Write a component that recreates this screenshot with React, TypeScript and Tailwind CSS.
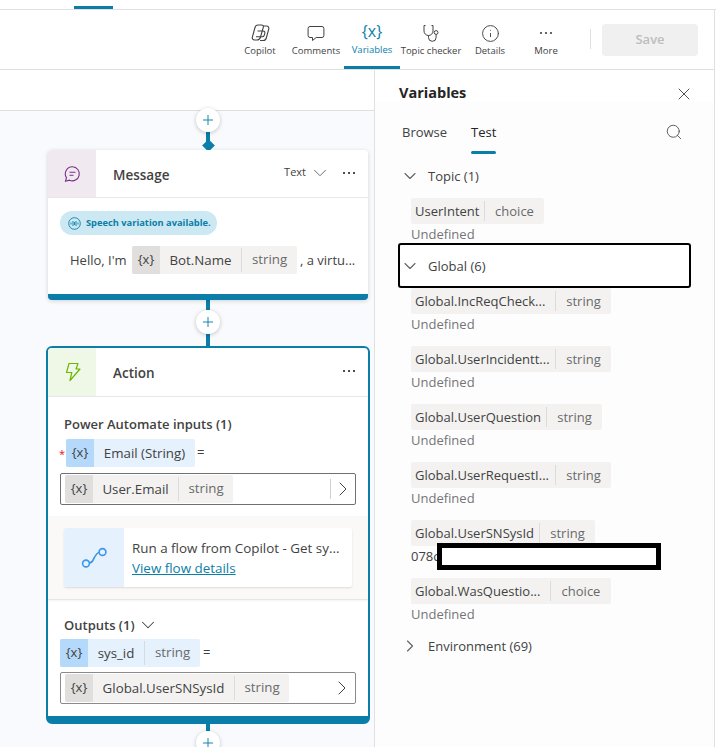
import React from "react";
import { X, Search, ChevronDown, ChevronRight, Info, Plus } from "lucide-react";

function Dots() {
  return (
    <svg width="14" height="4" viewBox="0 0 14 4" fill="currentColor" className="block">
      <circle cx="2" cy="2" r="1.1" />
      <circle cx="7" cy="2" r="1.1" />
      <circle cx="12" cy="2" r="1.1" />
    </svg>
  );
}

function ToolItem({ label, width, active, children }: { label: string; width: string; active?: boolean; children: React.ReactNode }) {
  return (
    <div className={`${width} relative h-full flex flex-col items-center justify-start pt-[12px] ${active ? "text-[#0a7ea8]" : "text-[#424242]"}`}>
      <div className="h-[22px] flex items-center justify-center">{children}</div>
      <div className={`text-[9.5px] leading-[13px] whitespace-nowrap ${active ? "-translate-y-px" : ""}`}>{label}</div>
      {active && <div className="absolute bottom-0 inset-x-0 h-[3px] bg-[#0a7ea8]" />}
    </div>
  );
}

function Chip({ name, type, nameW, typeW, tone = "gray" }: { name: string; type?: string; nameW: string; typeW?: string; tone?: "gray" | "blue" }) {
  const blue = tone === "blue";
  return (
    <div className={`h-[28px] inline-flex items-stretch rounded-[2px] overflow-hidden text-[13.3px] ${blue ? "bg-[#e5f1fc]" : "bg-[#f3f2f1]"}`}>
      <div className={`w-[28px] flex items-center justify-center text-[#424242] ${blue ? "bg-[#b4d9fb]" : "bg-[#e0dfdd]"}`}>
        <span className="text-[13px] leading-none whitespace-nowrap -mt-[2px]">{"{x}"}</span>
      </div>
      <div className={`${nameW} pt-px flex items-center justify-center text-[#424242] whitespace-nowrap`}>{name}</div>
      {type && (
        <div className={`${typeW} flex items-center my-[2px] justify-center border-l ${blue ? "border-[#d3dbe3]" : "border-[#dcdbd9]"} text-[#6a6a6a]`}>{type}</div>
      )}
    </div>
  );
}

function AddButton() {
  return (
    <div className="w-[24px] h-[24px] shrink-0 rounded-full bg-white shadow-[0_1px_4px_rgba(0,0,0,0.22)] flex items-center justify-center text-[#0a7ea8] relative z-10">
      <Plus size={16} strokeWidth={1.4} />
    </div>
  );
}

function Wire({ h }: { h: string }) {
  return <div className={`${h} w-[4px] bg-[#0a7ea8] shrink-0`} />;
}

function VarChip({ name, type, nameW, typeW }: { name: string; type: string; nameW: string; typeW: string }) {
  return (
    <div className="h-[26px] inline-flex items-stretch bg-[#f3f2f1] rounded-[2px] text-[13px]">
      <div className={`${nameW} pl-[4px] pt-px flex items-center text-[#424242] whitespace-nowrap`}>{name}</div>
      <div className={`${typeW} my-[3px] pt-px flex items-center justify-center border-l border-[#dcdbd9] text-[#6a6a6a]`}>{type}</div>
    </div>
  );
}

function VarEntry({ name, type, nameW, typeW, value = "Undefined", dark, className = "" }: { name: string; type: string; nameW: string; typeW: string; value?: string; dark?: boolean; className?: string }) {
  return (
    <div className={`flex flex-col items-start ${className}`}>
      <VarChip name={name} type={type} nameW={nameW} typeW={typeW} />
      <div className={`text-[13px] leading-[20px] ${dark ? "text-[#424242]" : "text-[#757575]"}`}>{value}</div>
    </div>
  );
}

export default function App() {
  return (
    <div className="w-[716px] h-[747px] overflow-hidden bg-white flex flex-col text-[#424242] font-['Open_Sans',sans-serif]">
      {/* top strip */}
      <div className="h-[10px] shrink-0 border-b border-[#e0e0e0] pl-[74px] pr-[1px]">
        <div className="w-[39px] h-[3px] mt-[6px] bg-[#0a7ea8]" />
      </div>
      {/* toolbar */}
      <div className="h-[60px] shrink-0 mr-[1px] border-r border-b border-[#e0e0e0] flex items-stretch justify-end pr-[16px]">
        <ToolItem label="Copilot" width="w-[56px]">
          <svg width="19" height="18" viewBox="0 0 19 18" fill="none" stroke="#424242" strokeWidth="1.1">
            <path d="M7 1h3.500c1.500 0 2.200 1 1.800 2.300L9.500 13c-.5 1.700-1.800 3-3.500 3H3.500C2 16 1 14.800 1.300 13.300L4 3.500C4.400 2 5.500 1 7 1Z" />
            <path d="M12.500 2h3c1.600 0 2.600 1.200 2.300 2.800L15.300 14c-.4 1.500-1.500 2.500-3 2.500H9" />
            <path d="M6.500 7h5.500c1.500 0 2.200 1 1.800 2.300l-.6 2c-.3 1-1.200 1.500-2.200 1.500H5" />
          </svg>
        </ToolItem>
        <ToolItem label="Comments" width="w-[56px]">
          <svg width="18" height="17" viewBox="0 0 18 17" fill="none" stroke="#424242" strokeWidth="1">
            <path d="M3 1.500h12a1.900 1.900 0 0 1 1.900 1.900v7.200a1.900 1.900 0 0 1-1.900 1.900H9.200l-3.700 3v-3H3A1.900 1.900 0 0 1 1.100 10.600V3.400A1.900 1.900 0 0 1 3 1.500Z" />
          </svg>
        </ToolItem>
        <ToolItem label="Variables" width="w-[56px]" active>
          <span className="text-[16px] leading-none -mt-[4px] whitespace-nowrap">{"{x}"}</span>
        </ToolItem>
        <ToolItem label="Topic checker" width="w-[62px]">
          <svg width="18" height="19" viewBox="0 0 18 19" fill="none" stroke="#424242" strokeWidth="1">
            <path d="M3.500 1.500H2v5.500a4.500 4.500 0 0 0 9 0V1.500H9.500" />
            <path d="M6.500 11.500v2a3.800 3.800 0 0 0 7.600 0V10.500" />
            <circle cx="14.100" cy="8.500" r="1.900" />
          </svg>
        </ToolItem>
        <ToolItem label="Details" width="w-[56px]">
          <Info size={19} strokeWidth={1.2} />
        </ToolItem>
        <ToolItem label="More" width="w-[56px]">
          <Dots />
        </ToolItem>
        <div className="w-px h-[20px] self-center bg-[#e0e0e0] mx-[16px] -mt-px" />
        <div className="w-[96px] h-[32px] self-center -ml-[5px] rounded-[4px] bg-[#f0f0f0] text-[#bdbdbd] text-[13px] font-semibold flex items-center justify-center">Save</div>
      </div>

      {/* body */}
      <div className="flex-1 min-h-0 flex mr-[1px] border-r border-[#e0e0e0]">
        {/* canvas */}
        <div className="w-[375px] shrink-0 border-r border-[#e0e0e0] flex flex-col">
          <div className="h-[41px] shrink-0 bg-white border-b border-[#e0e0e0]" />
          <div className="flex-1 min-h-0 bg-[#f8fafd] pl-[46px] w-[374px] flex flex-col">
            <div className="w-[324px] flex flex-col items-center">
              <div className="-mt-[3px]"><AddButton /></div>
              <Wire h="h-[14px]" />
              <div className="w-[9px] h-[9px] bg-[#0a7ea8] rotate-45 -mt-[5px] shrink-0" />
              {/* Message card */}
              <div className="w-[320px] relative z-10 bg-white rounded-[4px] overflow-hidden shadow-[0_1px_4px_rgba(0,0,0,0.16)] border-b-[6px] border-[#0a7ea8] h-[150px] shrink-0">
                <div className="h-[48px] flex items-center border-b border-[#e8e8e8]">
                  <div className="w-[48px] h-full bg-[#f0e9f0] flex items-center justify-center">
                    <svg width="18" height="18" viewBox="0 0 18 18" fill="none" stroke="#7a2f87" strokeWidth="1.1">
                      <path d="M9.500 1.800a7 7 0 1 1-3 13.400L2.500 16.300l1-3.600A7 7 0 0 1 9.500 1.800Z" />
                      <path d="M6.500 7.300h6M6.500 10.300h4" />
                    </svg>
                  </div>
                  <div className="ml-[17px] pt-[3px] text-[13.5px] font-semibold text-[#424242]">Message</div>
                  <div className="ml-auto text-[11px] -mt-[2px] text-[#424242]">Text</div>
                  <ChevronDown size={22} strokeWidth={1} className="ml-[3px] -mt-[1px] text-[#616161]" />
                  <div className="ml-[11px] mr-[12px] text-[#242424] -mt-[2px]"><Dots /></div>
                </div>
                <div className="pl-[12px] pt-[13px]">
                  <div className="w-[157px] h-[24px] rounded-full bg-[#cce8f2] flex items-center pl-[8px] text-[#0a7ea8] text-[9.3px] font-bold whitespace-nowrap">
                    <svg width="13" height="13" viewBox="0 0 13 13" fill="none" stroke="#0a7ea8" strokeWidth="0.9" className="mr-[5px] shrink-0">
                      <circle cx="6.500" cy="6.500" r="5.800" />
                      <path d="M3 5.500v2M5 4v5M6.500 5v3M8 4v5M10 5.500v2" />
                    </svg>
                    Speech variation available.
                  </div>
                  <div className="flex items-center mt-[11px] pl-[10px] text-[13px] text-[#424242] whitespace-nowrap">
                    <span className="w-[62px] pt-px">Hello, I'm</span>
                    <Chip name="Bot.Name" type="string" nameW="w-[81px]" typeW="w-[56px]" />
                    <span className="ml-[3px] pt-px">, a virtu...</span>
                  </div>
                </div>
              </div>
              <Wire h="h-[10px]" />
              <AddButton />
              <Wire h="h-[12px]" />
              {/* Action card */}
              <div className="w-[324px] h-[378px] shrink-0 rounded-[6px] border-2 border-b-[8px] border-[#0a7ea8] bg-white overflow-hidden">
                <div className="h-[49px] flex items-center border-b border-[#e8e8e8]">
                  <div className="w-[48px] h-full bg-[#eff7e7] flex items-center justify-center">
                    <svg width="18" height="20" viewBox="0 0 18 20" fill="none" stroke="#6bb700" strokeWidth="1.2" strokeLinejoin="round">
                      <path d="M6 1.500h9l-2 5.500h4L7 18.500l1.800-8H3.500Z" />
                    </svg>
                  </div>
                  <div className="ml-[17px] pt-[3px] text-[13.5px] font-semibold text-[#424242]">Action</div>
                  <div className="ml-auto mr-[12px] -mt-[2px] text-[#242424]"><Dots /></div>
                </div>
                <div className="h-[119px] relative px-[12px]">
                  <div className="pl-[4px] pt-[18px] text-[13px] leading-[18px] font-semibold text-[#424242]">Power Automate inputs (1)</div>
                  <div className="flex items-center mt-[6px] pl-[6px] relative">
                    <span className="absolute left-[-1px] top-[9px] text-[#e81123] text-[11px] leading-none">*</span>
                    <Chip name="Email (String)" nameW="w-[101px]" tone="blue" />
                    <span className="ml-[2px] text-[13px] text-[#424242]">=</span>
                  </div>
                  <div className="h-[32px] mt-[6px] rounded-[2px] border border-[#707070] flex items-center pl-[4px]">
                    <Chip name="User.Email" type="string" nameW="w-[85px]" typeW="w-[55px]" />
                    <div className="ml-auto w-px h-[20px] bg-[#d0d0d0]" />
                    <ChevronRight size={24} strokeWidth={1} className="text-[#424242]" />
                  </div>
                </div>
                <div className="h-[84px] bg-[#faf9f8] border-b border-[#e6e6e6] shadow-[0_1px_2px_rgba(0,0,0,0.05)] pl-[16px] pr-[16px] pt-[12px]">
                  <div className="h-[59px] bg-white rounded-[2px] shadow-[0_1px_2px_rgba(0,0,0,0.12)] flex overflow-hidden">
                    <div className="w-[60px] shrink-0 bg-[#e5f1fc] flex items-center justify-center">
                      <svg width="27" height="22" viewBox="0 0 27 22" fill="none" stroke="#3b97e8" strokeWidth="1.6">
                        <circle cx="5" cy="16.500" r="3.400" />
                        <circle cx="21.500" cy="5" r="3.400" />
                        <path d="M8.400 16c3.400-.3 3.500-3 5-5.500 1.300-2.500 2.800-4.800 4.800-5" />
                      </svg>
                    </div>
                    <div className="pl-[8px] pt-[10px] text-[13.4px] leading-[20px] whitespace-nowrap">
                      <div className="text-[#424242]">Run a flow from Copilot - Get sy...</div>
                      <div className="text-[#0a7ea8] underline">View flow details</div>
                    </div>
                  </div>
                </div>
                <div className="px-[12px] pt-[16px]">
                  <div className="pl-[4px] flex items-center text-[13px] leading-[18px] font-semibold text-[#424242]">
                    Outputs (1)
                    <ChevronDown size={22} strokeWidth={1.1} className="ml-[2px] -my-[2px]" />
                  </div>
                  <div className="flex items-center mt-[5px]">
                    <Chip name="sys_id" type="string" nameW="w-[56px]" typeW="w-[56px]" tone="blue" />
                    <span className="ml-[3px] text-[13px] text-[#424242]">=</span>
                  </div>
                  <div className="h-[32px] mt-[5px] rounded-[2px] border border-[#8a8a8a] flex items-center pl-[4px]">
                    <Chip name="Global.UserSNSysId" type="string" nameW="w-[141px]" typeW="w-[55px]" />
                    <ChevronRight size={24} strokeWidth={1} className="ml-auto mr-[1px] text-[#424242]" />
                  </div>
                </div>
              </div>
              <Wire h="h-[7px]" />
              <AddButton />
            </div>
          </div>
        </div>

        {/* panel */}
        <div className="flex-1 min-w-0 relative flex flex-col bg-[#fdfdfe]">
          <div className="h-[32px] shrink-0 flex items-end pl-[24px] pr-[20px] bg-white">
            <div className="text-[14.5px] leading-[20px] font-bold text-[#242424] translate-y-px">Variables</div>
            <X size={20} strokeWidth={1.1} className="ml-auto -mb-[2px] text-[#424242]" />
          </div>
          <div className="h-[37px] shrink-0 flex pl-[27px] pr-[31px] mt-[13px] text-[13px] text-[#424242] relative">
            <div className="pt-[8px]">Browse</div>
            <div className="ml-[24px] pt-[8px] relative font-medium text-[#242424]">
              Test
              <div className="absolute left-0 right-0 -bottom-[2px] h-[3px] rounded-full bg-[#0a7ea8]" />
            </div>
            <Search size={18} strokeWidth={1.1} className="ml-auto mt-[8px] text-[#424242]" />
          </div>
          <div className="pl-[36px] flex flex-col">
            <div className="h-[24px] mt-[12px] flex items-center -ml-[36px] pl-[25px] text-[13px]">
              <ChevronDown size={20} strokeWidth={1.3} className="text-[#616161]" />
              <span className="ml-[8px] pt-[2px]">Topic (1)</span>
            </div>
            <VarEntry className="mt-[10px]" name="UserIntent" type="choice" nameW="w-[73px]" typeW="w-[60px]" />
            <div className="h-[45px] w-[293px] -ml-[13px] -mt-[1px] relative z-10 rounded-[3px] border-2 border-black flex items-center text-[13px] bg-white">
              <ChevronDown size={20} strokeWidth={1.3} className="text-[#616161]" />
              <span className="ml-[8px] pt-[2px]">Global (6)</span>
            </div>
            <VarEntry name="Global.IncReqCheck..." type="string" nameW="w-[144px]" typeW="w-[56px]" />
            <VarEntry className="mt-[12px]" name="Global.UserIncidentt..." type="string" nameW="w-[144px]" typeW="w-[56px]" />
            <VarEntry className="mt-[12px]" name="Global.UserQuestion" type="string" nameW="w-[135px]" typeW="w-[56px]" />
            <VarEntry className="mt-[12px]" name="Global.UserRequestI..." type="string" nameW="w-[144px]" typeW="w-[56px]" />
            <div className="relative mt-[12px]">
              <VarEntry name="Global.UserSNSysId" type="string" nameW="w-[128px]" typeW="w-[56px]" value="078c" dark />
              <div className="absolute left-[26px] top-[23px] w-[224px] h-[27px] border-[5px] border-black bg-white" />
            </div>
            <VarEntry className="mt-[12px]" name="Global.WasQuestio..." type="choice" nameW="w-[139px]" typeW="w-[61px]" />
            <div className="h-[24px] mt-[10px] flex items-center -ml-[36px] pl-[25px] text-[13px]">
              <ChevronRight size={20} strokeWidth={1.3} className="text-[#616161]" />
              <span className="ml-[8px] pt-[2px]">Environment (69)</span>
            </div>
          </div>
        </div>
      </div>
    </div>
  );
}
